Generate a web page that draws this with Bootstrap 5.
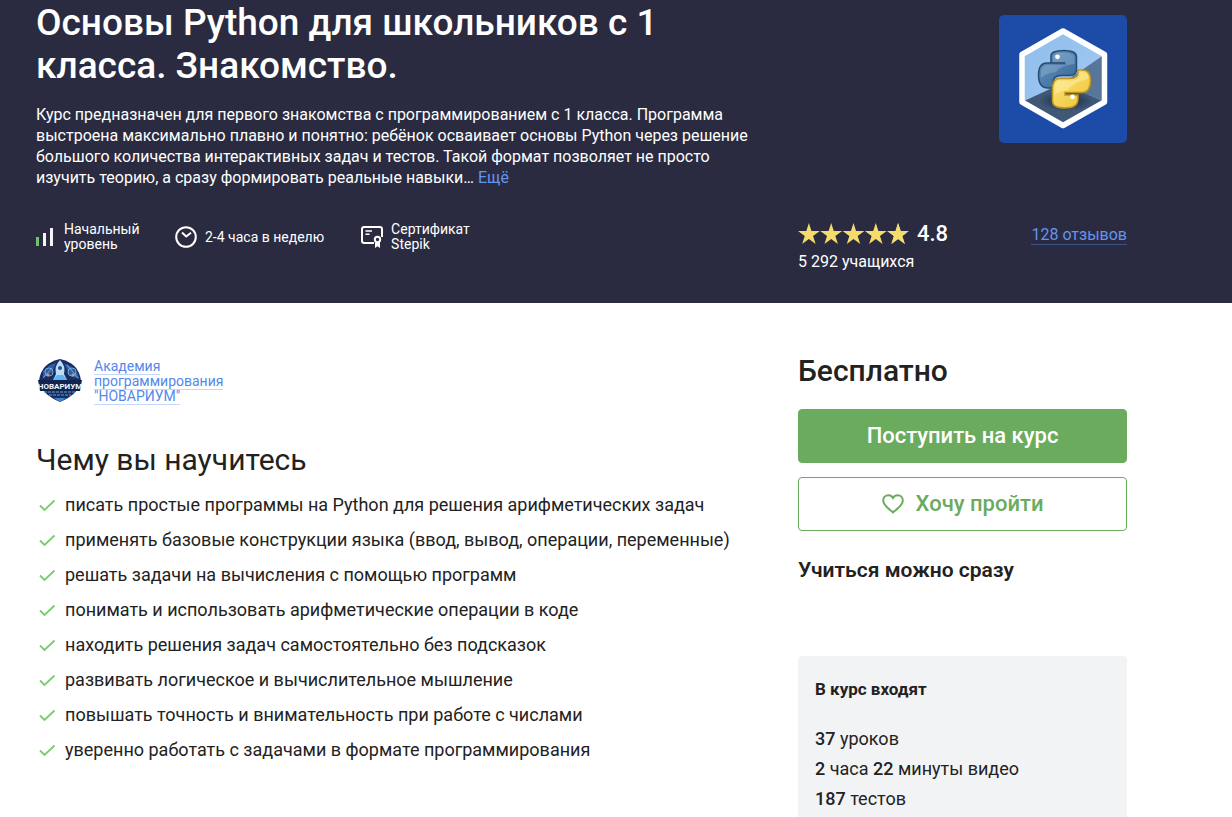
<!DOCTYPE html>
<html lang="ru">
<head>
<meta charset="utf-8">
<meta name="viewport" content="width=device-width, initial-scale=1">
<title>Основы Python для школьников с 1 класса. Знакомство.</title>
<link href="https://cdn.jsdelivr.net/npm/bootstrap@5.3.0/dist/css/bootstrap.min.css" rel="stylesheet">
<style>
body{font-family:Roboto,"Liberation Sans",sans-serif;color:#222;background:#fff;font-size:18px}
.promo-head{background:#2a2b40;color:#fff;padding-bottom:30px}
.page-wrap{padding-left:36px;padding-right:105px}
.two-cols{display:grid;grid-template-columns:minmax(0,1fr) 329px;column-gap:48px}
.course-title{font-size:37px;line-height:43px;font-weight:500;max-width:640px;padding-top:1px}
.course-desc{font-size:16px;line-height:21px;margin-top:17px}
.more-link,.reviews-link{color:#6495ed;text-decoration:none}
.meta-row{font-size:14px;line-height:15px;margin-top:34px;gap:37px}
.meta-level{width:102px}
.meta-cert{width:110px}
.course-logo{width:128px;height:128px;margin-top:15px}
.rating-value{font-size:22px;line-height:30px;font-weight:500}
.rating-row{margin-top:76px}
.students{font-size:16px;line-height:22px;margin-top:2px}
.reviews-link{font-size:16px;line-height:18px;border-bottom:1px solid #3f5385;margin-top:3px}
.page-body{padding-top:50px}
.author-row{padding-top:5px}
.author-link{font-size:14px;line-height:15px;color:#5588ea;text-decoration:none;width:140px}
.author-link span{border-bottom:1px solid #c4d8fa}
.learn-title{font-size:30px;line-height:38px;font-weight:400;margin-top:37px}
.learn-list li{line-height:35px;gap:9px}
.price{font-size:30px;line-height:36px;font-weight:500}
.btn-course{font-size:22px;line-height:26px;font-weight:500;border-radius:4px;padding:13px 12px;border:1px solid #6aab5e;color:#6aab5e;background:#fff}
.btn-join{background:#6aab5e;color:#fff;margin-top:20px}
.btn-wish{margin-top:14px}
.btn-join:hover{background:#5c9c51;color:#fff}
.btn-wish:hover{background:#f0f8ee;color:#6aab5e;border-color:#6aab5e}
.start-note{font-size:21px;line-height:26px;font-weight:600;margin-top:26px}
.includes{background:#f2f3f5;border-radius:4px;padding:20px 17px;margin-top:73px}
.includes h3{font-size:17px;line-height:26px;font-weight:700;margin-bottom:22px}
.includes li{line-height:30px}
.includes b{font-weight:500}
</style>
</head>
<body>
<header class="promo-head">
  <div class="page-wrap two-cols">
    <div>
      <h1 class="course-title mb-0">Основы Python для школьников с 1 класса. Знакомство.</h1>
      <p class="course-desc mb-0">Курс предназначен для первого знакомства с программированием с 1 класса. Программа выстроена максимально плавно и понятно: ребёнок осваивает основы Python через решение большого количества интерактивных задач и тестов. Такой формат позволяет не просто изучить теорию, а сразу формировать реальные навыки… <a class="more-link" href="#">Ещё</a></p>
      <div class="meta-row d-flex align-items-center">
        <div class="meta-level d-flex align-items-center gap-2">
          <svg class="flex-shrink-0" width="20" height="20" viewBox="0 0 20 20"><path d="M0 10h3v9H0z" fill="#72c267"/><path d="M7 6h3v13H7zM14 1h3v18h-3z" fill="#f4f4f6"/></svg>
          <span>Начальный уровень</span>
        </div>
        <div class="d-flex align-items-center gap-2">
          <svg class="flex-shrink-0" width="22" height="22" viewBox="0 0 22 22" fill="none" stroke="#fff" stroke-width="2"><circle cx="11" cy="11" r="9.8"/><path d="M7 6.500l4.200 4L16 6.800"/></svg>
          <span class="text-nowrap">2-4 часа в неделю</span>
        </div>
        <div class="meta-cert d-flex align-items-center gap-2">
          <svg class="flex-shrink-0" width="22" height="22" viewBox="0 0 22 22" fill="none" stroke="#fff" stroke-width="2"><path d="M13 17H3.200Q1 17 1 14.800V3.200Q1 1 3.200 1H18.800Q21 1 21 3.200V11"/><path d="M4.500 5h6.500M4.500 8.200h4" stroke-width="1.500"/><circle cx="16.500" cy="13.500" r="2.700"/><path d="M14 16v6l2.500-1.700L19 22v-6l-2.500 1z" fill="#fff" stroke="none"/></svg>
          <span>Сертификат Stepik</span>
        </div>
      </div>
    </div>
    <div>
      <svg class="course-logo d-block ms-auto" viewBox="0 0 128 128" role="img" aria-label="Python">
        <defs>
          <linearGradient id="sky" x1="0" y1="0" x2="1" y2="1"><stop offset="0" stop-color="#8fbdec"/><stop offset="1" stop-color="#a5cbf4"/></linearGradient>
          <radialGradient id="shade"><stop offset="0" stop-color="#162338"/><stop offset="1" stop-color="#162338" stop-opacity="0"/></radialGradient>
          <linearGradient id="snakeBlue" x1="0" y1="0" x2="1" y2="1"><stop offset="0" stop-color="#6795bf"/><stop offset="1" stop-color="#376594"/></linearGradient>
          <linearGradient id="snakeGold" x1="0" y1="0" x2="1" y2="1"><stop offset="0" stop-color="#fbe480"/><stop offset="1" stop-color="#eec431"/></linearGradient>
        </defs>
        <rect width="128" height="128" rx="5" fill="#1c4ba8"/>
        <path d="M64 16L105.500 39.500V87L64 110.500L23 87V39.500z" fill="url(#sky)"/>
        <path d="M105.500 39.500V87L64 68z" fill="#58759a"/>
        <path d="M23 87L64 68L105.500 87L64 110.500z" fill="#3f5876"/>
        <ellipse cx="67" cy="86" rx="27" ry="10" fill="url(#shade)"/>
        <path d="M64 16L105.500 39.500V87L64 110.500L23 87V39.500z" fill="none" stroke="#fff" stroke-width="5.500" stroke-linejoin="round"/>
        <path d="M52 48V41Q52 35.500 65 35.500Q77.500 35.500 77.500 42V54Q77.500 60.500 71 60.500H62Q54 60.500 54 68V73H49Q39.500 73 39.500 60Q39.500 48 48 48H66" fill="url(#snakeBlue)" stroke="#294c73" stroke-width="1.500"/>
        <path d="M54 42Q54 37.500 65 37.500Q75.500 37.500 75.500 43V49Q61 50 57 57Q47 58 42 63Q41 50 49 50H67V47H54z" fill="#a6c4df" opacity=".35"/>
        <circle cx="58.500" cy="41.800" r="2.400" fill="#fff"/>
        <path d="M79 55H83Q91.500 55 91.500 65Q91.500 77.500 83 77.500H66V80H79V84Q79 93 66 93Q53.500 93 53.500 86V74Q53.500 63.500 61 63.500H71Q79 63.500 79 57z" fill="url(#snakeGold)" stroke="#bd9420" stroke-width="1.500"/>
        <path d="M81 57H83Q89.500 57 89.500 64Q74 67 69 75Q61 76 55.500 80V74Q55.500 65.500 61 65.500H72Q81 65 81 59z" fill="#fff3b3" opacity=".45"/>
        <circle cx="73.500" cy="81.800" r="2.400" fill="#fff"/>
      </svg>
      <div class="rating-row d-flex align-items-center justify-content-between">
        <div class="d-flex align-items-center">
          <svg class="me-2" width="111" height="22" viewBox="0 0 112 22" role="img" aria-label="4.8 из 5">
            <defs>
              <path id="star" d="M11 0L13.600 7.900H22L15.200 12.900L17.800 21L11 16L4.200 21L6.800 12.900L0 7.900H8.400z"/>
              <clipPath id="part"><path d="M0 0H109V22H0z"/></clipPath>
            </defs>
            <use href="#star" x="90" fill="#d6d6da"/>
            <g fill="#f5db6b" clip-path="url(#part)"><use href="#star"/><use href="#star" x="22.500"/><use href="#star" x="45"/><use href="#star" x="67.500"/><use href="#star" x="90"/></g>
          </svg>
          <span class="rating-value">4.8</span>
        </div>
        <a class="reviews-link" href="#">128 отзывов</a>
      </div>
      <div class="students">5 292 учащихся</div>
    </div>
  </div>
</header>
<main class="page-wrap two-cols page-body">
  <section>
    <div class="author-row d-flex align-items-center">
      <svg class="flex-shrink-0 me-2" width="50" height="46" viewBox="0 0 50 46" role="img" aria-label="Новариум">
        <path d="M24 1Q43 5 45 23Q43 36 24 44Q5 36 3 23Q5 5 24 1z" fill="#172d63"/>
        <path d="M7 13L14 7L20 5L16 15L7 20zM28 5L36 9L42 16L43 21L34 18z" fill="#315c9f"/>
        <g fill="none" stroke="#6faae1"><circle cx="13" cy="14" r="4"/><circle cx="36" cy="14" r="4"/><path d="M7 20l9-10M31 7l11 13"/></g>
        <circle cx="12" cy="17" r="1.500" fill="#c99d74"/><circle cx="37" cy="17" r="1.500" fill="#c99d74"/>
        <path d="M24 2Q30 8 28 16L31 22H17L20 16Q18 8 24 2z" fill="#bcdcf7"/><circle cx="24" cy="10" r="2" fill="#244f96"/>
        <path d="M21 17h6l5 6H16z" fill="#5fb6f4"/>
        <path d="M2 22h44l-2 11H4z" fill="#10244f"/>
        <text x="24" y="31" text-anchor="middle" font-family="Roboto, sans-serif" font-size="8" font-weight="700" fill="#eef8ff">НОВАРИУМ</text>
        <path d="M8 34h32M13 37h22" stroke="#6a9dcc" stroke-dasharray="3 1"/><path d="M18 40h12l-6 4z" fill="#3e87cb"/>
      </svg>
      <a class="author-link" href="#"><span>Академия программирования "НОВАРИУМ"</span></a>
    </div>
    <h2 class="learn-title mb-0">Чему вы научитесь</h2>
    <svg class="d-none"><symbol id="check" viewBox="0 0 20 20"><path d="M4 10.500l4.500 4.500L18.500 5.500" fill="none" stroke="#7acb70" stroke-width="1.800"/></symbol></svg>
    <ul class="learn-list list-unstyled mt-2 mb-0">
      <li class="d-flex align-items-center"><svg width="20" height="20"><use href="#check"/></svg>писать простые программы на Python для решения арифметических задач</li>
      <li class="d-flex align-items-center"><svg width="20" height="20"><use href="#check"/></svg>применять базовые конструкции языка (ввод, вывод, операции, переменные)</li>
      <li class="d-flex align-items-center"><svg width="20" height="20"><use href="#check"/></svg>решать задачи на вычисления с помощью программ</li>
      <li class="d-flex align-items-center"><svg width="20" height="20"><use href="#check"/></svg>понимать и использовать арифметические операции в коде</li>
      <li class="d-flex align-items-center"><svg width="20" height="20"><use href="#check"/></svg>находить решения задач самостоятельно без подсказок</li>
      <li class="d-flex align-items-center"><svg width="20" height="20"><use href="#check"/></svg>развивать логическое и вычислительное мышление</li>
      <li class="d-flex align-items-center"><svg width="20" height="20"><use href="#check"/></svg>повышать точность и внимательность при работе с числами</li>
      <li class="d-flex align-items-center"><svg width="20" height="20"><use href="#check"/></svg>уверенно работать с задачами в формате программирования</li>
    </ul>
  </section>
  <aside>
    <div class="price">Бесплатно</div>
    <button type="button" class="btn btn-course btn-join w-100">Поступить на курс</button>
    <button type="button" class="btn btn-course btn-wish w-100 d-flex align-items-center justify-content-center gap-2"><svg class="me-1" width="22" height="20" viewBox="0 0 22 20"><path d="M11 18.500C7 15 1.200 11.300 1.200 6.500C1.200 3.400 3.500 1.200 6.300 1.200C8.300 1.200 10 2.200 11 4C12 2.200 13.700 1.200 15.700 1.200C18.500 1.200 20.800 3.400 20.800 6.500C20.800 11.300 15 15 11 18.500z" fill="none" stroke="#6aab5e" stroke-width="2"/></svg>Хочу пройти</button>
    <div class="start-note">Учиться можно сразу</div>
    <section class="includes">
      <h3>В курс входят</h3>
      <ul class="list-unstyled mb-0">
        <li><b>37</b> уроков</li>
        <li><b>2</b> часа <b>22</b> минуты видео</li>
        <li><b>187</b> тестов</li>
      </ul>
    </section>
  </aside>
</main>
<script src="https://cdn.jsdelivr.net/npm/bootstrap@5.3.0/dist/js/bootstrap.bundle.min.js"></script>
</body>
</html>
